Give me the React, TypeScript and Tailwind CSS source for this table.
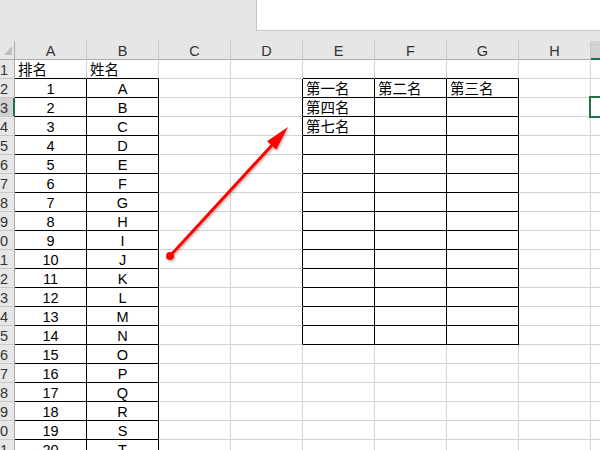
import React from "react";

const cols = ["A", "B", "C", "D", "E", "F", "G", "H", "I"];
const rows = Array.from({ length: 21 }, (_, i) => i + 1);

const rightTable: Record<string, string> = {
  E2: "第一名",
  F2: "第二名",
  G2: "第三名",
  E3: "第四名",
  E4: "第七名",
};

const inLeft = (c: string) => c === "A" || c === "B";
const inRight = (c: string) => c === "E" || c === "F" || c === "G";

const Cell = ({ r, c }: { r: number; c: string }) => {
  const blackBottom = (inLeft(c) && r >= 1) || (inRight(c) && r >= 1 && r <= 15);
  const blackRight =
    (inLeft(c) && r >= 2) || ((inRight(c) || c === "D") && r >= 2 && r <= 15);

  let text = "";
  let centered = false;
  if (c === "A") {
    text = r === 1 ? "排名" : String(r - 1);
    centered = r !== 1;
  } else if (c === "B") {
    text = r === 1 ? "姓名" : String.fromCharCode(63 + r);
    centered = r !== 1;
  } else {
    text = rightTable[c + r] ?? "";
  }

  return (
    <div
      className={`flex items-center h-[19px] border-b border-r pt-[3px] overflow-hidden whitespace-nowrap text-black ${
        blackBottom ? "border-b-black" : "border-b-[#d4d4d4]"
      } ${blackRight ? "border-r-black" : "border-r-[#d4d4d4]"} ${
        centered ? "justify-center" : "pl-[3px]"
      }`}
    >
      {text}
    </div>
  );
};

export default function App() {
  return (
    <div
      className="relative w-[600px] h-[450px] overflow-hidden bg-white text-[14.5px] leading-none"
      style={{ fontFamily: '"Liberation Sans", "Noto Sans CJK SC", sans-serif' }}
    >
      {/* ribbon / formula bar strip */}
      <div className="flex h-[41px] bg-[#e6e6e6]">
        <div className="w-[256px]" />
        <div className="flex-1 h-[31px] bg-white border-l border-b border-[#c6c6c6]" />
      </div>

      <div className="grid grid-cols-[15px_repeat(9,72px)] auto-rows-[19px]">
        {/* column headers */}
        <div className="relative h-[19px] bg-[#e6e6e6] border-r border-b border-r-[#ababab] border-b-[#ababab]">
          <svg width="14" height="18" className="absolute left-0 top-0">
            <polygon points="4,14 12,14 12,5" fill="#bfbfbf" />
          </svg>
        </div>
        {cols.map((c) => (
          <div
            key={c}
            className={
              c === "I"
                ? "flex items-center justify-center h-[19px] pt-[2px] bg-[#d2d2d2] border-b-2 border-b-[#217346] text-[#333]"
                : "flex items-center justify-center h-[19px] pt-[2px] bg-[#e6e6e6] border-r border-b border-r-[#c8c8c8] border-b-[#ababab] text-[#333]"
            }
          >
            {c}
          </div>
        ))}

        {rows.map((r) => (
          <React.Fragment key={r}>
            <div
              className={
                r === 3
                  ? "flex items-center justify-end h-[19px] pt-[3px] pr-[5px] overflow-hidden bg-[#d2d2d2] border-b border-r-2 border-b-[#c8c8c8] border-r-[#217346] text-[#333]"
                  : "flex items-center justify-end h-[19px] pt-[3px] pr-[6px] overflow-hidden bg-[#e6e6e6] border-b border-r border-b-[#c8c8c8] border-r-[#ababab] text-[#333]"
              }
            >
              <span className="shrink-0">{r}</span>
            </div>
            {cols.map((c) => (
              <Cell key={c} r={r} c={c} />
            ))}
          </React.Fragment>
        ))}
      </div>

      {/* active cell */}
      <div className="absolute left-[589px] top-[96px] w-[40px] h-[22px] border-2 border-[#217346]" />

      {/* red arrow */}
      <svg width="600" height="450" className="absolute left-0 top-0 pointer-events-none">
        <defs>
          <filter id="sh" x="-20%" y="-20%" width="140%" height="140%">
            <feDropShadow dx="1" dy="1.5" stdDeviation="1" floodColor="#000" floodOpacity="0.3" />
          </filter>
        </defs>
        <g filter="url(#sh)">
          <line x1="170" y1="256" x2="274" y2="143" stroke="#ff0000" strokeWidth="3" />
          <polygon points="288,127 276.3,149.8 267.1,141.2" fill="#ff0000" />
          <circle cx="170" cy="256" r="4" fill="#ff0000" />
        </g>
      </svg>
    </div>
  );
}
